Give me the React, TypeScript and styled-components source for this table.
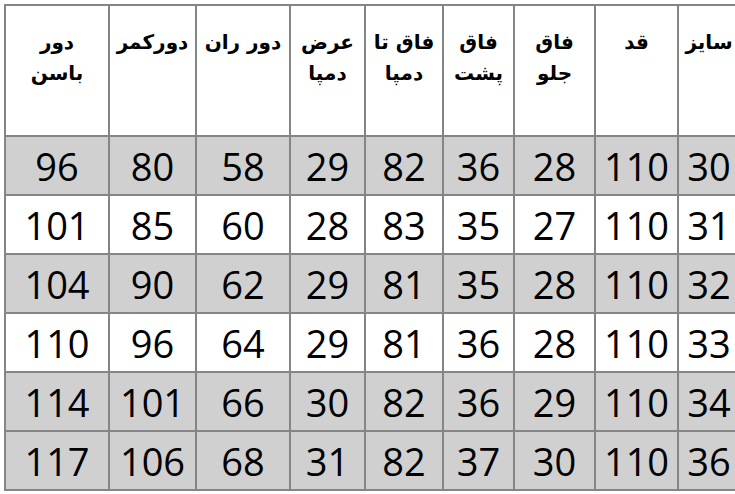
import styled, { createGlobalStyle } from "styled-components";

const GlobalStyle = createGlobalStyle`
  html, body {
    margin: 0;
    padding: 0;
    background: #ffffff;
    overflow: hidden;
  }
`;

const Page = styled.div`
  padding: 4px 0 0 4px;
  width: 735px;
`;

const Table = styled.table`
  direction: rtl;
  border-collapse: collapse;
  table-layout: fixed;
  width: 735px;
`;

const HeadCell = styled.th`
  height: 108px;
  padding: 21px 4px 0;
  vertical-align: top;
  text-align: center;
  border: 2px solid #858585;
  background: #ffffff;
  font-family: "DejaVu Sans", "Liberation Sans", sans-serif;
  font-weight: 700;
  font-size: 20px;
  line-height: 31px;
  color: #000000;
`;

const Row = styled.tr<{ $shaded: boolean }>`
  background: ${(p) => (p.$shaded ? "#d0d0d0" : "#ffffff")};
`;

const Cell = styled.td`
  height: 57px;
  padding: 0;
  text-align: center;
  vertical-align: middle;
  border: 2px solid #858585;
  font-family: "Open Sans", "Liberation Sans", sans-serif;
  font-size: 38px;
  line-height: 1;
  color: #000000;
`;

// column widths from right to left
const widths = [62, 83, 81, 71, 78, 75, 94, 87, 104];

const headers: string[][] = [
  ["سایز"],
  ["قد"],
  ["فاق", "جلو"],
  ["فاق", "پشت"],
  ["فاق تا", "دمپا"],
  ["عرض", "دمپا"],
  ["دور ران"],
  ["دورکمر"],
  ["دور", "باسن"],
];

const rows: { values: number[]; shaded: boolean }[] = [
  { values: [30, 110, 28, 36, 82, 29, 58, 80, 96], shaded: true },
  { values: [31, 110, 27, 35, 83, 28, 60, 85, 101], shaded: false },
  { values: [32, 110, 28, 35, 81, 29, 62, 90, 104], shaded: true },
  { values: [33, 110, 28, 36, 81, 29, 64, 96, 110], shaded: false },
  { values: [34, 110, 29, 36, 82, 30, 66, 101, 114], shaded: true },
  { values: [36, 110, 30, 37, 82, 31, 68, 106, 117], shaded: true },
];

export default function App() {
  return (
    <>
      <GlobalStyle />
      <Page>
        <Table>
          <colgroup>
            {widths.map((w, i) => (
              <col key={i} style={{ width: w }} />
            ))}
          </colgroup>
          <thead>
            <tr>
              {headers.map((lines, i) => (
                <HeadCell key={i}>
                  {lines.map((l, j) => (
                    <div key={j}>{l}</div>
                  ))}
                </HeadCell>
              ))}
            </tr>
          </thead>
          <tbody>
            {rows.map((r, i) => (
              <Row key={i} $shaded={r.shaded}>
                {r.values.map((v, j) => (
                  <Cell key={j}>{v}</Cell>
                ))}
              </Row>
            ))}
          </tbody>
        </Table>
      </Page>
    </>
  );
}
